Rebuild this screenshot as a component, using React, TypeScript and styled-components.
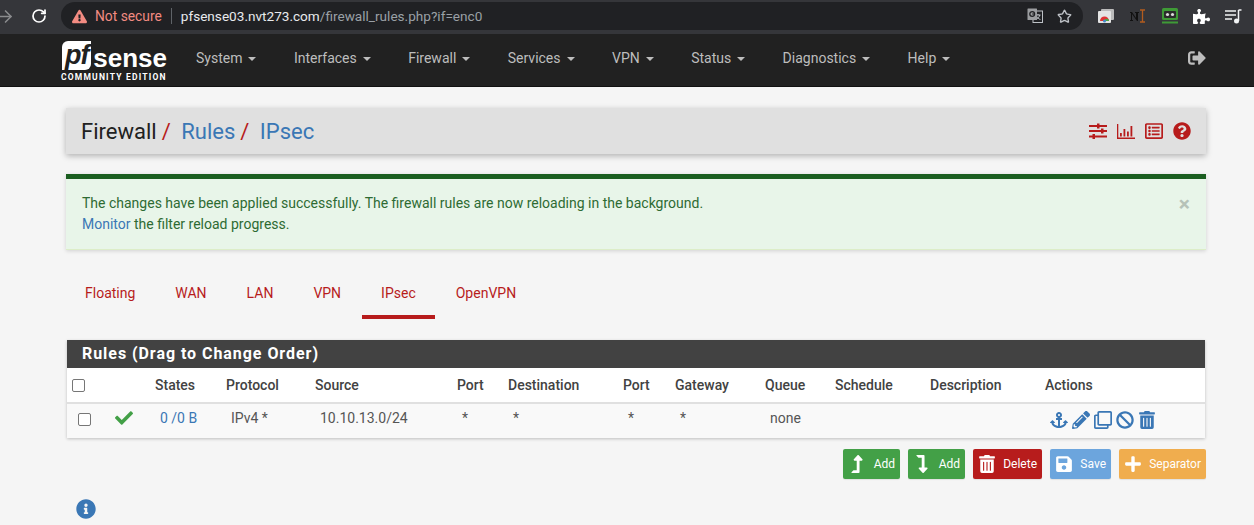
import React from "react";
import styled, { createGlobalStyle } from "styled-components";
import { ArrowRight, RotateCw, Star } from "lucide-react";
import {
  FaAnchor,
  FaBan,
  FaCheck,
  FaExclamationTriangle,
  FaInfoCircle,
  FaLevelDownAlt,
  FaLevelUpAlt,
  FaPencilAlt,
  FaPlus,
  FaPuzzlePiece,
  FaQuestionCircle,
  FaRegClone,
  FaRegListAlt,
  FaSave,
  FaSignOutAlt,
  FaTrashAlt,
} from "react-icons/fa";

const GlobalStyle = createGlobalStyle`
  html, body {
    margin: 0;
    padding: 0;
    height: 525px;
    overflow: hidden;
    background: #f5f5f5;
    font-family: Roboto, "Liberation Sans", sans-serif;
    font-size: 14px;
    color: #424242;
  }
`;

const ChromeBar = styled.div`
  height: 34px;
  background: #35363a;
  display: flex;
  align-items: center;
  padding: 0 12px 2px 0;
  box-sizing: border-box;
  color: #e8eaed;
`;

const NavGlyphs = styled.div`
  width: 61px;
  display: flex;
  align-items: center;
  justify-content: space-between;
  padding-right: 14px;
  box-sizing: border-box;
  flex: none;
`;

const BackArrow = styled(ArrowRight)`
  margin-left: -4px;
`;

const Omnibox = styled.div`
  width: 1022px;
  height: 28px;
  flex: none;
  border-radius: 14px;
  background: #202124;
  display: flex;
  align-items: center;
  padding: 0 10px 0 11px;
  box-sizing: border-box;
  font-size: 14px;
`;

const NotSecure = styled.span`
  color: #f28b82;
  margin-left: 8px;
  padding-right: 9px;
  border-right: 1px solid #5f6368;
  line-height: 16px;
  font-size: 13.8px;
`;

const Host = styled.span`
  color: #e8eaed;
  margin-left: 9px;
  font-size: 13.6px;
`;

const UrlPath = styled.span`
  color: #9aa0a6;
`;

const OmniRight = styled.div`
  margin-left: auto;
  display: flex;
  align-items: center;
  gap: 14px;
  padding-right: 1px;
  color: #bdc1c6;
`;

const Extensions = styled.div`
  display: flex;
  align-items: center;
  gap: 15px;
  margin-left: 14px;
`;

const ExtSlot = styled.div`
  width: 17px;
  height: 17px;
  display: flex;
  align-items: center;
  justify-content: center;
  flex: none;
`;

const TopNav = styled.nav`
  height: 53px;
  background: #212121;
  border-bottom: 1px solid #111;
  box-sizing: border-box;
  display: flex;
  align-items: center;
  padding: 0 48px 4px 62px;
`;

const Logo = styled.div`
  width: 105px;
  margin: 7px 29px 0 0;
  flex: none;
  color: #fff;
  display: flex;
  flex-direction: column;
`;

const LogoMark = styled.div`
  display: flex;
  align-items: flex-end;
  height: 29px;
`;

const LogoPf = styled.span`
  background: #fff;
  color: #212121;
  font-family: "Liberation Sans", sans-serif;
  font-style: italic;
  font-weight: 700;
  font-size: 27px;
  line-height: 29px;
  height: 29px;
  width: 30px;
  border-radius: 6px 0 6px 0;
  text-align: center;
  letter-spacing: -1px;
`;

const LogoSense = styled.span`
  font-family: "Liberation Sans", sans-serif;
  font-weight: 700;
  font-size: 26px;
  line-height: 24px;
  margin-left: 2px;
`;

const LogoEdition = styled.div`
  font-size: 8.5px;
  font-weight: 700;
  letter-spacing: 1.2px;
  line-height: 10px;
  margin: 2px 0 0 -1px;
  white-space: nowrap;
`;

const NavItem = styled.a`
  color: #bdbdbd;
  font-size: 14px;
  margin-right: 37.45px;
  display: inline-flex;
  align-items: center;
  white-space: nowrap;
  &::after {
    content: "";
    margin-left: 6px;
    margin-top: 1px;
    border-left: 4px solid transparent;
    border-right: 4px solid transparent;
    border-top: 4px solid #bdbdbd;
  }
`;

const NavExit = styled.div`
  margin-left: auto;
  color: #bdbdbd;
  font-size: 18px;
  display: flex;
`;

const Page = styled.main`
  width: 1140px;
  margin-left: 66px;
  padding-top: 21px;
`;

const HeaderBar = styled.div`
  height: 46px;
  background: #e0e0e0;
  box-shadow: 0 2px 6px rgba(0, 0, 0, 0.28);
  display: flex;
  align-items: center;
  padding: 0 15px;
  font-size: 22px;
`;

const Crumb = styled.span<{ $link?: boolean }>`
  color: ${(p) => (p.$link ? "#3a77b5" : "#212121")};
`;

const CrumbSep = styled.span`
  color: #b71c1c;
  margin: 0 10.5px 0 5px;
`;

const HeaderIcons = styled.div`
  margin-left: auto;
  display: flex;
  align-items: center;
  gap: 10px;
  color: #b71c1c;
  font-size: 18px;
`;

const Alert = styled.div`
  margin-top: 20px;
  height: 76px;
  box-sizing: border-box;
  background: #e8f5e9;
  border-top: 5px solid #1b5e20;
  border-bottom: 1px solid #dcedc8;
  box-shadow: 0 1px 4px rgba(0, 0, 0, 0.15);
  padding: 14px 16px 0;
  line-height: 21px;
  color: #2e6b33;
  display: flex;
  justify-content: space-between;
`;

const AlertLink = styled.a`
  color: #3a77b5;
`;

const CloseX = styled.span`
  color: #b6c2b8;
  font-size: 21px;
  font-weight: 700;
  line-height: 24px;
  margin: -1px 0 0 0;
`;

const Tabs = styled.div`
  display: flex;
  margin-top: 22px;
`;

const Tab = styled.a<{ $active?: boolean }>`
  color: #b71c1c;
  height: 47px;
  box-sizing: border-box;
  padding: 13px 19px 0 19px;
  line-height: 17px;
  border-bottom: 4px solid ${(p) => (p.$active ? "#b71c1c" : "transparent")};
  & + & {
    margin-left: 2px;
  }
`;

const Panel = styled.section`
  margin: 21px 0 0 1px;
  width: 1138px;
  background: #fff;
  box-shadow: 0 1px 3px rgba(0, 0, 0, 0.22);
`;

const PanelHead = styled.h2`
  margin: 0;
  height: 28px;
  background: #424242;
  color: #fff;
  font-size: 16px;
  font-weight: 700;
  line-height: 28px;
  padding-left: 15px;
  letter-spacing: 0.95px;
`;

const RulesTable = styled.table`
  width: 1138px;
  table-layout: fixed;
  border-collapse: collapse;
  font-size: 14px;
`;

const Th = styled.th`
  height: 35px;
  padding: 0 0 0 5px;
  text-align: left;
  font-weight: 500;
  color: #424242;
  border-bottom: 2px solid #e0e0e0;
  box-sizing: border-box;
  font-size: 14px;
`;

const Td = styled.td`
  height: 35px;
  padding: 0 0 6px 10px;
  background: #f9f9f9;
  color: #555;
  box-sizing: border-box;
`;

const CheckTd = styled(Td)`
  padding: 0 0 3px 11px;
`;

const CheckBox = styled.span`
  display: block;
  width: 11px;
  height: 11px;
  border: 1px solid #767676;
  border-radius: 2px;
  background: #fff;
`;

const CheckMark = styled(FaCheck)`
  display: block;
  margin: 0 0 0 -5px;
  font-size: 18px;
  color: #43a047;
`;

const StateLink = styled.a`
  color: #3a77b5;
`;

const ActionIcons = styled.div`
  display: flex;
  align-items: center;
  gap: 4px;
  color: #3a77b5;
  font-size: 18px;
  height: 20px;
  margin-top: 4px;
`;

const Buttons = styled.div`
  display: flex;
  justify-content: flex-end;
  gap: 8px;
  margin-top: 11px;
`;

const Btn = styled.button<{ $bg: string; $w: number }>`
  width: ${(p) => p.$w}px;
  height: 30px;
  border: 0;
  border-radius: 2px;
  background: ${(p) => p.$bg};
  color: #fff;
  font-family: inherit;
  font-size: 12px;
  font-weight: 400;
  display: flex;
  align-items: center;
  justify-content: space-between;
  padding: 0 5px;
  box-sizing: border-box;
  box-shadow: 0 1px 1px rgba(0, 0, 0, 0.08);
  & svg {
    font-size: 18px;
    flex: none;
  }
`;

const InfoRow = styled.div`
  margin: 20px 0 0 10px;
  color: #3a77b5;
  font-size: 20px;
  display: flex;
`;

const columns = [43, 40, 71, 89, 142, 51, 115, 52, 90, 70, 95, 115, 165];

const heads = [
  "",
  "",
  "States",
  "Protocol",
  "Source",
  "Port",
  "Destination",
  "Port",
  "Gateway",
  "Queue",
  "Schedule",
  "Description",
  "Actions",
];

const menu = [
  "System",
  "Interfaces",
  "Firewall",
  "Services",
  "VPN",
  "Status",
  "Diagnostics",
  "Help",
];

const tabs = ["Floating", "WAN", "LAN", "VPN", "IPsec", "OpenVPN"];

const TranslateIcon = () => (
  <svg width="16" height="16" viewBox="0 0 16 16">
    <rect x="6" y="3" width="9.500" height="11.500" fill="#202124" stroke="#bdc1c6" />
    <path d="M9 7h4.500M11 6v1M12.800 7c-.5 2-2 3.600-3.600 4.300M9.800 8.500c.7 1.300 2 2.500 3.600 3" stroke="#bdc1c6" fill="none" />
    <rect x="0.500" y="0.500" width="9.500" height="11.500" rx="0.500" fill="#9b9da0" />
    <circle cx="5.200" cy="6" r="2.400" fill="none" stroke="#202124" strokeWidth="1.300" />
    <path d="M5.200 6h2.400" stroke="#202124" strokeWidth="1.100" />
  </svg>
);

const SlidersIcon = () => (
  <svg width="18" height="16" viewBox="0 0 18 16" fill="currentColor">
    <rect x="0" y="2" width="18" height="2" />
    <rect x="0" y="7" width="18" height="2" />
    <rect x="0" y="12.500" width="18" height="2" />
    <rect x="8" y="0.500" width="2.500" height="5" />
    <rect x="12" y="5.500" width="2.500" height="5" />
    <rect x="3.500" y="11" width="2.500" height="5" />
  </svg>
);

const BarsIcon = () => (
  <svg width="18" height="15" viewBox="0 0 18 15" fill="currentColor">
    <path d="M0 0h1.300v13.500H18V15H0z" />
    <rect x="3" y="9" width="1.800" height="3.500" />
    <rect x="6.500" y="5" width="1.800" height="7.500" />
    <rect x="10" y="7.500" width="1.800" height="5" />
    <rect x="13.500" y="2" width="1.800" height="10.500" />
  </svg>
);

const App = () => (
  <>
    <GlobalStyle />
    <ChromeBar>
      <NavGlyphs>
        <BackArrow size={19} color="#8a8b8d" />
        <RotateCw size={16} color="#fff" strokeWidth={2.6} />
      </NavGlyphs>
      <Omnibox>
        <FaExclamationTriangle size={15} color="#f28b82" />
        <NotSecure>Not secure</NotSecure>
        <Host>
          pfsense03.nvt273.com<UrlPath>/firewall_rules.php?if=enc0</UrlPath>
        </Host>
        <OmniRight>
          <TranslateIcon />
          <Star size={15} strokeWidth={2.2} />
        </OmniRight>
      </Omnibox>
      <Extensions>
        <ExtSlot>
          <svg width="16" height="15" viewBox="0 0 16 15">
            <rect x="3" y="0" width="13" height="11" rx="1" fill="#bbb" />
            <rect x="0" y="2" width="13" height="12" rx="1" fill="#e4e4e4" />
            <path d="M2 12a4.500 4.500 0 0 1 9 0z" fill="#d33" />
            <path d="M6.500 12a2 2 0 0 1 4.500 0z" fill="#4a4" />
            <circle cx="6.500" cy="12" r="1.500" fill="#48c" />
          </svg>
        </ExtSlot>
        <ExtSlot>
          <svg width="16" height="15" viewBox="0 0 16 15">
            <path d="M0 3h2l4 6V4H5V3h4v1H8v8H7L2 5v6h1v1H0v-1h1V4H0z" fill="#111" />
            <path d="M10 1h5M12.500 1v12M10 13h5" stroke="#b35c1e" strokeWidth="1.300" fill="none" />
          </svg>
        </ExtSlot>
        <ExtSlot>
          <svg width="16" height="16" viewBox="0 0 16 16">
            <rect x="0" y="0" width="16" height="12" rx="1.500" fill="#3f9a36" />
            <rect x="0" y="13.500" width="16" height="2" fill="#3f9a36" />
            <rect x="2" y="3" width="12" height="7" rx="1" fill="#2b2b2b" />
            <circle cx="5.500" cy="6.500" r="1.600" fill="#ddd" />
            <circle cx="10.500" cy="6.500" r="1.600" fill="#ddd" />
          </svg>
        </ExtSlot>
        <ExtSlot>
          <FaPuzzlePiece size={17} color="#fff" />
        </ExtSlot>
        <ExtSlot>
          <svg width="17" height="15" viewBox="0 0 17 15">
            <path d="M0 2h11M0 6h11M0 10h7" stroke="#f1f3f4" strokeWidth="1.500" />
            <path d="M13.500 1v11" stroke="#f1f3f4" strokeWidth="1.500" />
            <path d="M13.500 1h3" stroke="#f1f3f4" strokeWidth="1.500" />
            <circle cx="11.500" cy="12" r="2.500" fill="#f1f3f4" />
          </svg>
        </ExtSlot>
      </Extensions>
    </ChromeBar>
    <TopNav>
      <Logo>
        <LogoMark>
          <LogoPf>pf</LogoPf>
          <LogoSense>sense</LogoSense>
        </LogoMark>
        <LogoEdition>COMMUNITY EDITION</LogoEdition>
      </Logo>
      {menu.map((item) => (
        <NavItem key={item}>{item}</NavItem>
      ))}
      <NavExit>
        <FaSignOutAlt />
      </NavExit>
    </TopNav>
    <Page>
      <HeaderBar>
        <Crumb>Firewall</Crumb>
        <CrumbSep>/</CrumbSep>
        <Crumb $link>Rules</Crumb>
        <CrumbSep>/</CrumbSep>
        <Crumb $link>IPsec</Crumb>
        <HeaderIcons>
          <SlidersIcon />
          <BarsIcon />
          <FaRegListAlt />
          <FaQuestionCircle />
        </HeaderIcons>
      </HeaderBar>
      <Alert>
        <div>
          The changes have been applied successfully. The firewall rules are
          now reloading in the background.
          <br />
          <AlertLink>Monitor</AlertLink> the filter reload progress.
        </div>
        <CloseX>×</CloseX>
      </Alert>
      <Tabs>
        {tabs.map((t) => (
          <Tab key={t} $active={t === "IPsec"}>
            {t}
          </Tab>
        ))}
      </Tabs>
      <Panel>
        <PanelHead>Rules (Drag to Change Order)</PanelHead>
        <RulesTable>
          <colgroup>
            {columns.map((w, i) => (
              <col key={i} width={w} />
            ))}
          </colgroup>
          <thead>
            <tr>
              {heads.map((h, i) => (
                <Th key={i}>{i === 0 ? <CheckBox /> : h}</Th>
              ))}
            </tr>
          </thead>
          <tbody>
            <tr>
              <CheckTd>
                <CheckBox />
              </CheckTd>
              <Td>
                <CheckMark />
              </Td>
              <Td>
                <StateLink>0 /0 B</StateLink>
              </Td>
              <Td>IPv4 *</Td>
              <Td>10.10.13.0/24</Td>
              <Td>*</Td>
              <Td>*</Td>
              <Td>*</Td>
              <Td>*</Td>
              <Td>none</Td>
              <Td />
              <Td />
              <Td>
                <ActionIcons>
                  <FaAnchor />
                  <FaPencilAlt />
                  <FaRegClone />
                  <FaBan />
                  <FaTrashAlt />
                </ActionIcons>
              </Td>
            </tr>
          </tbody>
        </RulesTable>
      </Panel>
      <Buttons>
        <Btn $bg="#43a047" $w={57}>
          <FaLevelUpAlt />
          Add
        </Btn>
        <Btn $bg="#43a047" $w={57}>
          <FaLevelDownAlt />
          Add
        </Btn>
        <Btn $bg="#b71c1c" $w={69}>
          <FaTrashAlt />
          Delete
        </Btn>
        <Btn $bg="#6ca5dd" $w={61}>
          <FaSave />
          Save
        </Btn>
        <Btn $bg="#f0ad4e" $w={87}>
          <FaPlus />
          Separator
        </Btn>
      </Buttons>
      <InfoRow>
        <FaInfoCircle />
      </InfoRow>
    </Page>
  </>
);

export default App;
